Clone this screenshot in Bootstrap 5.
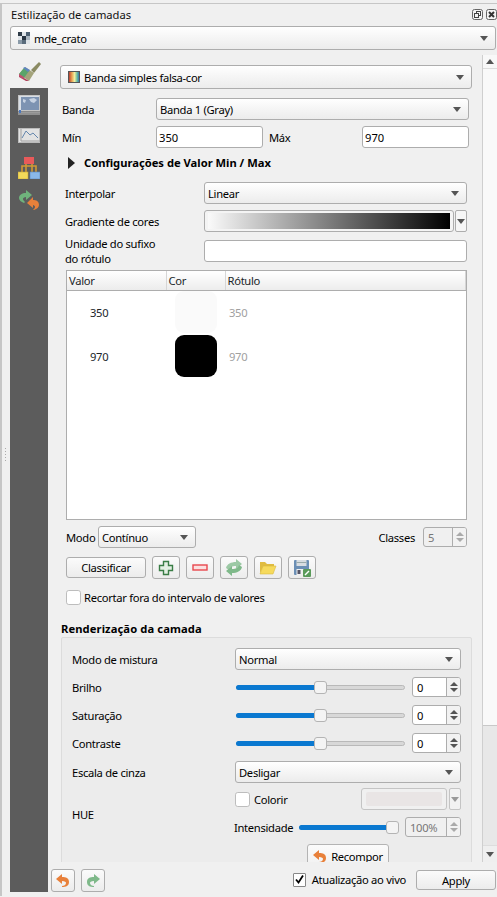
<!DOCTYPE html>
<html lang="pt"><head><meta charset="utf-8"><title>Estilização de camadas</title>
<link href="https://cdn.jsdelivr.net/npm/bootstrap@5.3.0/dist/css/bootstrap.min.css" rel="stylesheet">
<style>
html,body{margin:0;width:497px;height:897px;overflow:hidden;background:#f0f0f0}
body{font:11.2px/15px "Noto Sans","Liberation Sans",sans-serif;color:#000;letter-spacing:-.3px}
.shell{margin-top:3px;border-top:1px solid #c6c6c6;border-left:2px solid #c6c6c6;height:893px;position:relative}
.title-row{height:22px;padding:0 0 2px 9px;color:#111;letter-spacing:0}
.dock-ic{width:11px;height:11px;margin-left:3px}
.cmb{height:22px;border:1px solid #adadad;border-radius:3px;background:linear-gradient(#fff,#f6f6f6 45%,#ececec);padding:0 3px;flex:none;white-space:nowrap}
.cmb::after{content:"";margin-left:auto;margin-right:4px;border:4px solid transparent;border-top:5px solid #555;border-bottom:0}
.layer-cmb{height:24px;width:486px;margin:0 0 5px 8px;padding-left:7px}
.main-row{height:837px}
.side{width:38px;margin-left:8px}
.side-top{height:33px;padding-top:7px}
.side-rest{background:#5c5c5c;flex:1;padding-top:7px}
.si-chart{margin-top:13px}.si-tree{margin-top:14px}.si-sync{margin-top:11px}
.rcol{width:449px}
.panel{height:807px}
.pane{width:431px;margin-left:1px;overflow:hidden;flex:none}
.pane>*{flex-shrink:0}
.sbar{width:15px;margin-left:2px;background:#e8e8e8;flex:none;border-left:1px solid #cfcfcf}
.sb-btn{height:14px;background:#f8f8f8;border-bottom:1px solid #ddd}
.sb-btn.lo{border:0;border-top:1px solid #ddd;background:#efefef;height:17px}
.sb-thumb{height:657px;background:#f9f9f9;border-bottom:1px solid #c8c8c8}
.up{border:4px solid transparent;border-bottom:5px solid #555;border-top:0}
.dn{border:4px solid transparent;border-top:5px solid #555;border-bottom:0}
.rw{height:22px}
.fld{height:22px;border:1px solid #adadad;border-radius:3px;background:#fff;padding:0 2px;font-size:11.2px;line-height:15px;box-shadow:none;color:#000;min-height:0;flex:none}
.r-renderer{margin:10px 0 0 11px}
.w412{width:412px;height:24px;padding-left:7px}
.r-banda{margin:9px 0 0 13px}
.lb-banda{width:94px}
.w313{width:313px}
.r-min{margin:6px 0 0 13px}
.w107{width:107px}
.lb-max{width:99px;padding-left:6px}
.r-tog{margin:7px 0 0 19px;height:15px;font-weight:700;gap:9px;letter-spacing:0}
.tri{border:6px solid transparent;border-left:7px solid #222;border-right:0}
.r-int{margin:12px 0 0 16px}
.lb-int{width:139px;flex:none}
.w263{width:263px}
.r-grad{margin:6px 0 0 16px}
.ramp-wrap{width:250px;height:22px;border:1px solid #adadad;border-radius:3px;padding:2px 3px;background:#f4f4f4}
.ramp{height:100%;background:linear-gradient(90deg,#fafafa,#000)}
.ramp-btn{width:12px;height:22px;margin-left:1px;border:1px solid #adadad;border-radius:2px;background:#f6f6f6}
.r-suf{margin:8px 0 0 16px}
.tbl-box{margin:8px 0 0 17px;width:401px;height:250px;border:1px solid #adadad;background:#fff}
.tbl-box table{table-layout:fixed;width:100%;margin:0}
.tbl-box th{height:19px;padding:1px 0 0 2px;font-weight:400;background:linear-gradient(#fff,#ececec);border-bottom:1px solid #adadad;border-right:1px solid #d6d6d6;font-size:11.2px;line-height:15px;vertical-align:middle}
.tbl-box td{height:44px;padding:0;border:0;vertical-align:middle;font-size:11.2px;background:#fff}
.c1{width:99px}.c2{width:59px}
.tv{padding-left:23px!important}
.sw{width:42px;height:42px;border-radius:9px;margin:0 0 0 9px}
.sw-a{background:#fafafa}.sw-b{background:#000}
.tl{color:#a0a0a0;padding-left:4px!important}
.r-modo{margin:6px 13px 0 17px}
.lb-modo{width:32px}
.w98{width:98px}
.lb-cl{margin-left:auto;margin-right:8px}
.spn{height:20px;border:1px solid #adadad;border-radius:3px;background:#fff;flex:none;overflow:hidden}
.spn-v{flex:1;padding-left:4px}
.spn-b{width:14px;border-left:1px solid #adadad;background:#f2f2f2;gap:2px}
.spn-b i{display:block;border:4px solid transparent;border-top:0;border-bottom:4px solid #555}
.spn-b i+i{border-bottom:0;border-top:4px solid #555}
.spn.off{background:#f0f0f0;color:#777}
.spn.off .spn-b i{border-bottom-color:#aaa}
.spn.off .spn-b i+i{border-top-color:#aaa;border-bottom-color:transparent}
.w44{width:44px}.w49{width:49px}.w56{width:56px}
.r-btns{margin:8px 0 0 17px;height:23px;gap:6px}
.qbtn{height:21px;border:1px solid #adadad;border-radius:3px;background:linear-gradient(#fbfbfb,#ececec);font-size:11.2px;line-height:15px;padding:0;color:#000;flex:none;letter-spacing:-.3px}
.b-cl{width:80px;margin-top:1px}
.b-ic{width:28px;height:23px}
.r-chk{margin:11px 0 0 17px;height:15px;gap:3px}
.cbx{width:15px;height:15px;margin:0;border:1px solid #bdbdbd;border-radius:2px;background-color:#fff;flex:none}
.r-ttl{margin:14px 0 0 12px;height:18px;font-weight:700;letter-spacing:.1px}
.gbox{margin-left:12px;width:411px;height:240px;border:1px solid #dcdcdc;border-radius:2px;background:#ececec;padding:10px 10px 0}
.lb-g{width:163px;flex:none}
.w226{width:226px}
.r-s{height:20px;margin-top:8px}
.r-s.first{margin-top:7px}
.sld{position:relative;width:169px;height:5px;margin-left:1px;margin-right:7px;background:#d8d8d8;border:1px solid #b9b9b9;border-radius:3px;flex:none}
.sld-f{background:#0a78d0;border-radius:3px 0 0 3px;margin:-1px 0 0 -1px;height:5px}
.sld-h{position:absolute;top:-5px;width:13px;height:13px;border:1px solid #b4b4b4;border-radius:3px;background:#f4f4f4}
.r-hue{margin-top:5px}
.hue-col{width:226px}
.hue-l{margin-top:19px}
.hue-r{height:22px}
.hue-cb{margin:0 4px 0 0}
.hue-tx{width:107px}
.hue-sw{width:86px;height:22px;border:1px solid #c4c4c4;border-radius:3px;background:#f0f0f0;padding:3px 4px}
.hue-sw div{height:100%;background:#e9e5e5;border-radius:2px}
.hue-ar{width:12px;height:22px;margin-left:2px;border:1px solid #c4c4c4;border-radius:2px;background:#f2f2f2}
.dn.g{border-top-color:#999}
.r-int2{height:20px;margin-top:7px}
.lb-i{width:64px;margin-left:-1px;margin-top:1px;flex:none}
.sld.s2{width:99px;margin-right:7px}
.b-rec{width:82px;height:24px;margin:7px 0 0 72px;gap:4px;border-color:#b4b4b4;background:linear-gradient(#fbfbfb,#f0f0f0)}
.foot{height:30px;padding:7px 0 0 3px;gap:6px}
.b-un{width:24px;height:23px}
.live{margin:3px 4px 0 auto;gap:6px}
.chk-on{width:13px;height:14px;border:1px solid #888;background:#fff;border-radius:1px;flex:none}
.b-app{width:80px;height:20px;margin:1px 1px 0 0}
.grip{position:absolute;left:2px;top:443px;width:3px;height:14px;background:radial-gradient(circle,#aaa 0.7px,transparent 1px) 0 0/3px 3px}
</style></head><body>
<div class="shell d-flex flex-column">
 <div class="grip"></div>
 <div class="title-row d-flex align-items-center"><span>Estilização de camadas</span>
  <svg class="dock-ic ms-auto" viewBox="0 0 11 11"><rect x=".5" y=".5" width="10" height="10" rx="2" fill="#f4f4f4" stroke="#666"/><rect x="4.5" y="2.5" width="4" height="4" fill="none" stroke="#444"/><rect x="2.5" y="4.5" width="4" height="4" fill="#f4f4f4" stroke="#444"/></svg>
  <svg class="dock-ic" viewBox="0 0 11 11"><rect x=".5" y=".5" width="10" height="10" rx="2" fill="#f4f4f4" stroke="#666"/><path d="M3 3l5 5M8 3l-5 5" stroke="#333" stroke-width="2"/></svg>
 </div>
 <div class="cmb layer-cmb d-flex align-items-center">
  <svg width="12" height="12" viewBox="0 0 12 12" class="me-1"><rect width="12" height="12" fill="#dfe4e8"/><rect width="4" height="4" fill="#2f3c48"/><rect x="8" width="4" height="4" fill="#4d6072"/><rect x="4" y="4" width="4" height="4" fill="#263340"/><rect x="8" y="4" width="4" height="4" fill="#aab6c0"/><rect y="8" width="4" height="4" fill="#8a9aa8"/><rect x="4" y="8" width="4" height="4" fill="#5a6c7c"/></svg>
  <span>mde_crato</span></div>
 <div class="main-row d-flex">
  <div class="side d-flex flex-column">
   <div class="side-top d-flex justify-content-center align-items-start">
    <svg width="23" height="19" viewBox="0 0 23 19"><path d="M13 8L21 0l2 2-7 9z" fill="#8a8a62"/><path d="M1 12l6-7 9 6-5 8z" fill="#a3a37a"/><path d="M1 12l5-6 5 3-5 7z" fill="#5aa46a"/><path d="M5 6l2-1 5 3-2 2z" fill="#5f86c0"/><path d="M1 12l5 4 5 3-3 0-7-4z" fill="#b0405a"/><path d="M1 12l5 3-1 2-4-3z" fill="#c05070"/></svg></div>
   <div class="side-rest d-flex flex-column align-items-center">
    <svg width="22" height="20" viewBox="0 0 22 20"><rect x=".5" y=".5" width="21" height="15" fill="#d8dee6" stroke="#c4c4c4"/><rect x="3" y="2" width="18" height="13" fill="#7d93b2"/><path d="M11 4l5-1 3 2-3 3-3-1zM5 4l3 1-1 3-2-1z" fill="#c7d2e2"/><rect x="0" y="16.5" width="22" height="1.2" fill="#b8b8b8"/><rect x="0" y="18.5" width="22" height="1" fill="#c4c4c4"/><rect x="1" y="15" width="2" height="3" fill="#4a78c0"/></svg>
    <svg class="si-chart" width="22" height="15" viewBox="0 0 22 15"><rect x=".5" y=".5" width="21" height="14" fill="#e2e2e2" stroke="#bbb"/><path d="M3 1v12h19" fill="none" stroke="#a0a0a0"/><path d="M4 10l4-7 4 4 3-2 5 5" fill="none" stroke="#6486ad"/></svg>
    <svg class="si-tree" width="22" height="22" viewBox="0 0 22 22"><path d="M4 15v-6h14v6M8 7v9M14 7v9" fill="none" stroke="#d09a35" stroke-width="1.6"/><rect x="6" y="0" width="10" height="7" fill="#e85a5a"/><rect x="0" y="15" width="10" height="7" fill="#f2d95a" stroke="#c8a838" stroke-width=".6"/><rect x="12" y="15" width="10" height="7" fill="#8ab8e8" stroke="#5a88b8" stroke-width=".6"/></svg>
    <svg class="si-sync" width="20" height="20" viewBox="0 0 20 20"><path d="M7 0l6 5-6 5V7c-2 0-3 1-3 2s1 2 2 3l-1 1C2 12 0 10 0 8c0-3 3-5 7-5z" fill="#6fb37c"/><path d="M14 7L8 13l6 5v-3c1 0 2 1 2 2 0 1-1 2-2 3h1c3-1 5-3 5-5 0-4-3-5-6-5z" fill="#e8803a"/></svg>
   </div>
  </div>
  <div class="rcol d-flex flex-column">
   <div class="panel d-flex">
    <div class="pane d-flex flex-column">
     <div class="r-renderer"><div class="cmb w412 d-flex align-items-center"><svg width="12" height="12" viewBox="0 0 12 12" class="me-1"><defs><linearGradient id="rb"><stop offset="0" stop-color="#b03030"/><stop offset=".3" stop-color="#e8a050"/><stop offset=".55" stop-color="#f0f0a0"/><stop offset=".8" stop-color="#60b8a0"/><stop offset="1" stop-color="#3060b0"/></linearGradient></defs><rect x=".5" y=".5" width="11" height="11" fill="url(#rb)" stroke="#555"/></svg><span>Banda simples falsa-cor</span></div></div>
     <div class="rw r-banda d-flex align-items-center"><span class="lb-banda">Banda</span><div class="cmb w313 d-flex align-items-center">Banda 1 (Gray)</div></div>
     <div class="rw r-min d-flex align-items-center"><span class="lb-banda">Mín</span><input class="form-control fld w107" value="350" aria-label="Mín"><span class="lb-max">Máx</span><input class="form-control fld w107" value="970" aria-label="Máx"></div>
     <div class="r-tog d-flex align-items-center"><span class="tri"></span><span>Configurações de Valor Min / Max</span></div>
     <div class="rw r-int d-flex align-items-center"><span class="lb-int">Interpolar</span><div class="cmb w263 d-flex align-items-center">Linear</div></div>
     <div class="rw r-grad d-flex align-items-center"><span class="lb-int">Gradiente de cores</span><div class="ramp-wrap"><div class="ramp"></div></div><div class="ramp-btn d-flex align-items-center justify-content-center"><span class="dn"></span></div></div>
     <div class="rw r-suf d-flex align-items-center"><span class="lb-int">Unidade do sufixo<br>do rótulo</span><input class="form-control fld w263" aria-label="Unidade do sufixo do rótulo"></div>
     <div class="tbl-box">
      <table class="table table-borderless"><thead><tr><th class="c1">Valor</th><th class="c2">Cor</th><th>Rótulo</th></tr></thead>
      <tbody><tr><td class="tv">350</td><td><div class="sw sw-a"></div></td><td class="tl">350</td></tr><tr><td class="tv">970</td><td><div class="sw sw-b"></div></td><td class="tl">970</td></tr></tbody></table>
     </div>
     <div class="rw r-modo d-flex align-items-center"><span class="lb-modo">Modo</span><div class="cmb w98 d-flex align-items-center">Contínuo</div><span class="lb-cl">Classes</span><div class="spn off w44 d-flex"><div class="spn-v d-flex align-items-center">5</div><div class="spn-b d-flex flex-column align-items-center justify-content-center"><i></i><i></i></div></div></div>
     <div class="r-btns d-flex">
      <button class="btn qbtn b-cl">Classificar</button>
      <button class="btn qbtn b-ic d-flex align-items-center justify-content-center" aria-label="Adicionar"><svg width="16" height="16" viewBox="0 0 16 16"><path d="M5.5 1.5h5v4h4v5h-4v4h-5v-4h-4v-5h4z" fill="#e4f0e4" stroke="#3a7d46" stroke-width="1.4"/></svg></button>
      <button class="btn qbtn b-ic d-flex align-items-center justify-content-center" aria-label="Remover"><svg width="16" height="8" viewBox="0 0 16 8"><rect x="1" y="1" width="14" height="5" fill="#fbe0e0" stroke="#e8484e" stroke-width="1.4"/></svg></button>
      <button class="btn qbtn b-ic d-flex align-items-center justify-content-center" aria-label="Inverter"><svg width="20" height="17" viewBox="0 0 20 17"><path d="M12 0l6 5-6 5V7C8 7 6 8 5 11L2 9c1-4 5-6 10-6z" fill="#9cc9a5"/><path d="M12 0l6 5-6 5V7C8 7 6 8 5 11L2 9c1-4 5-6 10-6z" fill="#7fb98a" transform="rotate(180 10 8.5)"/></svg></button>
      <button class="btn qbtn b-ic d-flex align-items-center justify-content-center" aria-label="Abrir"><svg width="18" height="15" viewBox="0 0 18 15"><path d="M1 13V2h5l2 2h7v2H5L1 13z" fill="#e0bc40"/><path d="M1 14l3-8h13l-3 8z" fill="#f6da5c" stroke="#d8b840" stroke-width=".6"/></svg></button>
      <button class="btn qbtn b-ic d-flex align-items-center justify-content-center" aria-label="Guardar"><svg width="18" height="18" viewBox="0 0 18 18"><rect x="1" y="1" width="15" height="15" rx="1" fill="#6b8fb5"/><rect x="3.5" y="1" width="10" height="6" fill="#d8dde2"/><rect x="3.5" y="3" width="10" height="1" fill="#9aa"/><rect x="3.5" y="10" width="10" height="6" fill="#f0f0f0"/><rect x="4.5" y="11" width="3" height="4" fill="#556"/><rect x="10" y="10" width="8" height="8" rx="1" fill="#5a9a5a"/><path d="M12 16l4-4" stroke="#fff" stroke-width="1.5"/></svg></button>
     </div>
     <div class="r-chk d-flex align-items-center"><input type="checkbox" class="form-check-input cbx" aria-label="Recortar"><span>Recortar fora do intervalo de valores</span></div>
     <div class="r-ttl d-flex align-items-center">Renderização da camada</div>
     <div class="gbox">
      <div class="rw d-flex align-items-center"><span class="lb-g">Modo de mistura</span><div class="cmb w226 d-flex align-items-center">Normal</div></div>
      <div class="r-s first d-flex align-items-center"><span class="lb-g">Brilho</span><div class="sld"><div class="sld-f" style="width:50%"></div><div class="sld-h" style="left:77px"></div></div><div class="spn w49 d-flex"><div class="spn-v d-flex align-items-center">0</div><div class="spn-b d-flex flex-column align-items-center justify-content-center"><i></i><i></i></div></div></div>
      <div class="r-s d-flex align-items-center"><span class="lb-g">Saturação</span><div class="sld"><div class="sld-f" style="width:50%"></div><div class="sld-h" style="left:77px"></div></div><div class="spn w49 d-flex"><div class="spn-v d-flex align-items-center">0</div><div class="spn-b d-flex flex-column align-items-center justify-content-center"><i></i><i></i></div></div></div>
      <div class="r-s d-flex align-items-center"><span class="lb-g">Contraste</span><div class="sld"><div class="sld-f" style="width:50%"></div><div class="sld-h" style="left:77px"></div></div><div class="spn w49 d-flex"><div class="spn-v d-flex align-items-center">0</div><div class="spn-b d-flex flex-column align-items-center justify-content-center"><i></i><i></i></div></div></div>
      <div class="rw d-flex align-items-center mt-2"><span class="lb-g">Escala de cinza</span><div class="cmb w226 d-flex align-items-center">Desligar</div></div>
      <div class="r-hue d-flex">
       <span class="lb-g align-self-start hue-l">HUE</span>
       <div class="hue-col d-flex flex-column align-items-start">
        <div class="hue-r d-flex align-items-center"><input type="checkbox" class="form-check-input cbx hue-cb" aria-label="Colorir"><span class="hue-tx">Colorir</span><div class="hue-sw"><div></div></div><div class="hue-ar d-flex align-items-center justify-content-center"><span class="dn g"></span></div></div>
        <div class="r-int2 d-flex align-items-center"><span class="lb-i">Intensidade</span><div class="sld s2"><div class="sld-f" style="width:93%"></div><div class="sld-h" style="left:86px"></div></div><div class="spn off w56 d-flex"><div class="spn-v d-flex align-items-center">100%</div><div class="spn-b d-flex flex-column align-items-center justify-content-center"><i></i><i></i></div></div></div>
        <button class="btn qbtn b-rec d-flex align-items-center justify-content-center"><svg width="14" height="13" viewBox="0 0 14 13"><path d="M6 0L0 5l6 5V7c3 0 4 1 4 2 0 2-2 3-4 3v1c4 0 7-1 7-5S10 3 6 3z" fill="#e8803a"/></svg><span>Recompor</span></button>
       </div>
      </div>
     </div>
    </div>
    <div class="sbar d-flex flex-column">
     <div class="sb-btn d-flex align-items-center justify-content-center"><span class="up"></span></div>
     <div class="sb-thumb"></div>
     <div class="flex-grow-1"></div>
     <div class="sb-btn lo d-flex align-items-center justify-content-center"><span class="dn"></span></div>
    </div>
   </div>
   <div class="foot d-flex">
    <button class="btn qbtn b-un d-flex align-items-center justify-content-center" aria-label="Desfazer"><svg width="14" height="13" viewBox="0 0 14 13"><path d="M6 0L0 5l6 5V7c3 0 4 1 4 2 0 2-2 3-4 3v1c4 0 7-1 7-5S10 3 6 3z" fill="#e8803a"/></svg></button>
    <button class="btn qbtn b-un d-flex align-items-center justify-content-center" aria-label="Refazer"><svg width="14" height="13" viewBox="0 0 14 13"><path d="M8 0l6 5-6 5V7C5 7 4 8 4 9c0 2 2 3 4 3v1C4 13 1 12 1 8s3-5 7-5z" fill="#7fb98a"/></svg></button>
    <div class="live d-flex align-items-center align-self-start"><span class="chk-on d-flex align-items-center justify-content-center"><svg width="11" height="11" viewBox="0 0 11 11"><path d="M2 5.5l2.5 3L9 1.5" fill="none" stroke="#000" stroke-width="1.8"/></svg></span><span>Atualização ao vivo</span></div>
    <button class="btn qbtn b-app">Apply</button>
   </div>
  </div>
 </div>
</div>
</body></html>
